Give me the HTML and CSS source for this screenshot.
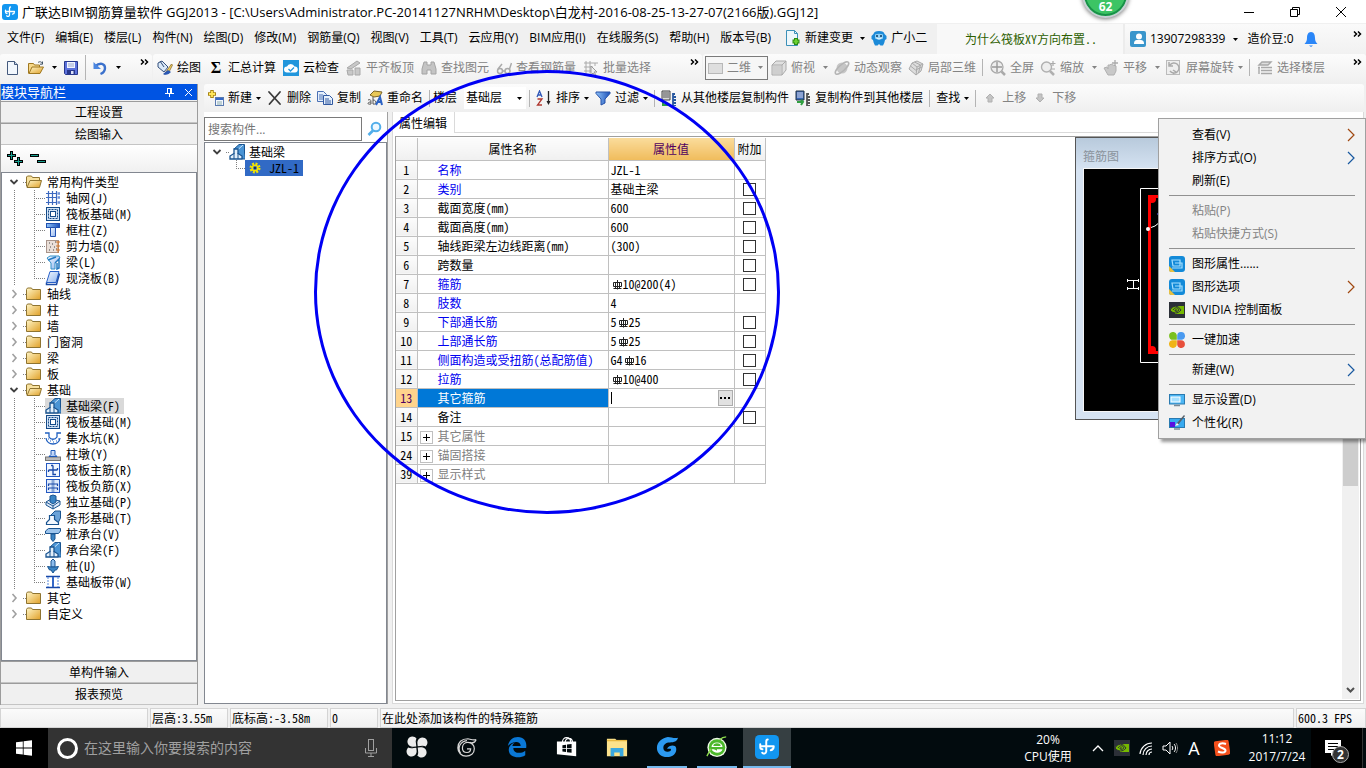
FILE: index.html
```html
<!DOCTYPE html>
<html lang="zh-CN">
<head>
<meta charset="utf-8">
<title>广联达BIM钢筋算量软件 GGJ2013</title>
<link rel="stylesheet" href="styles.css">
</head>
<body>
<svg class="defs" aria-hidden="true">
  <defs>
    <linearGradient id="gFold" x1="0" y1="0" x2="1" y2="1"><stop offset="0" stop-color="#fff6c8"/><stop offset="1" stop-color="#e0a028"/></linearGradient>
    <linearGradient id="gBlue" x1="0" y1="0" x2="1" y2="1"><stop offset="0" stop-color="#f4f9ff"/><stop offset="1" stop-color="#8fb4ee"/></linearGradient>
    <linearGradient id="gFun" x1="0" y1="0" x2="1" y2="0"><stop offset="0" stop-color="#8ec2f8"/><stop offset="1" stop-color="#1c50b8"/></linearGradient>
  </defs>
  <symbol id="app" viewBox="0 0 16 16"><rect width="16" height="16" rx="3" fill="#1296f0"/><path d="M8.500 3Q7.500 3 7.500 4.500V11a1.500 1.500 0 0 1-2.700.8M3.500 6.200V8q0 1.500 1.500 1.500M3.500 7.500h9M12.500 7.500q0 2.300-2 2.700" fill="none" stroke="#fff" stroke-width="1.300" stroke-linecap="round"/></symbol>
  <symbol id="down" viewBox="0 0 5 3"><path d="M0 0h5L2.500 3z" fill="currentColor"/></symbol>
  <symbol id="more" viewBox="0 0 9 6"><path d="M1 .5l2.500 2.500L1 5.500M5 .5l2.500 2.500L5 5.500" fill="none" stroke="#000" stroke-width="1.500"/></symbol>
  <symbol id="new" viewBox="0 0 16 16"><path d="M1.500 1.500h7l3 3v10h-10z" fill="#f2f7fd" stroke="#44597c"/><path d="M8.500 1.500v3h3" fill="#c8d8ec" stroke="#44597c"/></symbol>
  <symbol id="open" viewBox="0 0 16 16"><path d="M.5 13.500v-10h5l1 1.500h5v2" fill="#f6d88a" stroke="#a07820"/><path d="M1 13.500l3-6.500h11.500l-3.500 6.500z" fill="url(#gFold)" stroke="#a07820"/><path d="M10 2.500c2-1.500 4-.5 4.500 1.500m0-2.500v2.700h-2.500" fill="none" stroke="#456"/></symbol>
  <symbol id="save" viewBox="0 0 16 16"><path d="M1.500 1.500h13v13h-12l-1-1z" fill="#5d72dc" stroke="#28388c"/><rect x="4" y="2" width="8" height="6" fill="#f2f5ff"/><path d="M5 4h6M5 6h6" stroke="#99a6cc"/><rect x="4" y="10" width="8" height="4.500" fill="#28388c"/><rect x="8" y="11" width="2.500" height="3" fill="#dce2fa"/></symbol>
  <symbol id="undo" viewBox="0 0 16 16"><path d="M3 6.500c5-4.500 10-3 10 1.500 0 3-2 5-4.500 6" fill="none" stroke="#3b71cc" stroke-width="2.400"/><path d="M1.500 2v7H9z" fill="#4b86e0"/></symbol>
  <symbol id="brush" viewBox="0 0 16 16"><path d="M1 3l4-2 6 6-4 5-6-5z" fill="#dbe9f8" stroke="#35507c"/><path d="M3 1l4 6" stroke="#35507c"/><path d="M14.500 4l-5 7-2 3 4-1 4-8z" fill="#f0d060" stroke="#7a5a20" stroke-width=".7"/><path d="M6 14c3 2 6 0 8-2l-3-2z" fill="#2a58b4"/></symbol>
  <symbol id="cloud" viewBox="0 0 16 16"><rect width="16" height="16" fill="#2196dc"/><path d="M4 12.500a3 3 0 0 1 0-6 4 4 0 0 1 7.500 0 3 3 0 0 1 .5 6z" fill="#fff"/><path d="M5.500 9l2 2 3.500-3.500" fill="none" stroke="#2196dc" stroke-width="1.300"/></symbol>
  <symbol id="align" viewBox="0 0 16 16"><path d="M1 8l10-7 3 2-9 6zM1 10h6v5H2zM9 8h5v7H9z" fill="#c8c8c8" stroke="#a8a8a8"/></symbol>
  <symbol id="binoc" viewBox="0 0 16 16"><path d="M3 2h3v3h4V2h3l2 7v5h-5v-4H6v4H1V9z" fill="#c4c4c4" stroke="#a4a4a4"/></symbol>
  <symbol id="glass" viewBox="0 0 16 16"><g fill="none" stroke="#aaa" stroke-width="1.500"><circle cx="4" cy="11" r="2.500"/><circle cx="11.500" cy="11" r="2.500"/><path d="M6.500 11h2.500M2 9l4-5M13.500 9l2-6"/></g></symbol>
  <symbol id="batch" viewBox="0 0 16 16"><path d="M1 3h14M1 7h9M1 11h7M3 1v13M7 1v12M12 3v3" stroke="#aaa" fill="none"/><path d="M8 6l6 6h-3l2 3-1 1-2-3-2 2z" fill="#eee" stroke="#999"/></symbol>
  <symbol id="rect2d" viewBox="0 0 16 16"><rect x=".5" y="3.500" width="14" height="10" fill="#dedede" stroke="#b8b8b8"/></symbol>
  <symbol id="cube" viewBox="0 0 16 16"><path d="M1 5l4-4h10v9l-4 5H1z" fill="#e0e0e0" stroke="#aaa"/><path d="M1 5h10v10M11 5l4-4" fill="none" stroke="#aaa"/><path d="M2 6h8v8H2z" fill="#cfcfcf"/></symbol>
  <symbol id="orbit" viewBox="0 0 16 16"><circle cx="8" cy="8" r="5.500" fill="#c6c6c6"/><ellipse cx="8" cy="8" rx="8.500" ry="3" transform="rotate(-42 8 8)" fill="none" stroke="#b4b4b4" stroke-width="1.500"/></symbol>
  <symbol id="local3d" viewBox="0 0 16 16"><path d="M1 9l3-6 5-2 6 3-2 7-5 4z" fill="#ddd" stroke="#aaa"/><path d="M4 3l5 4-1 8M9 7l6-3M2.500 6l5 4 6.500-3M6.500 2l6 3-2 8" fill="none" stroke="#aaa"/></symbol>
  <symbol id="full" viewBox="0 0 16 16"><circle cx="7" cy="7" r="6" fill="#eee" stroke="#aaa" stroke-width="1.300"/><path d="M7 2v10M2 7h10" stroke="#999" stroke-width="1.400"/><path d="M11.500 11.500l3.500 3.500" stroke="#aaa" stroke-width="2.500"/></symbol>
  <symbol id="zoom" viewBox="0 0 16 16"><circle cx="6.500" cy="7" r="5" fill="#eee" stroke="#b0b0b0" stroke-width="1.400"/><path d="M10 11l4 4" stroke="#b0b0b0" stroke-width="2.500"/><path d="M13 1v5M10.500 3.500h5M11 9h4" stroke="#aaa" stroke-width="1.200"/></symbol>
  <symbol id="pan" viewBox="0 0 16 16"><path d="M1 8l3-1 1 2V5h2l1-1 2 1 3 1v5l-2 4H5z" fill="#c8c8c8" stroke="#b0b0b0"/><path d="M12 0v6M9 3h6" stroke="#aaa" stroke-width="1.300"/></symbol>
  <symbol id="rot" viewBox="0 0 16 16"><rect x=".5" y=".5" width="13" height="14" fill="#eee" stroke="#bbb"/><path d="M4 5a5 5 0 1 1 0 6M3 2v4h4M7 14l3-2-3-2" fill="none" stroke="#aaa" stroke-width="1.500"/></symbol>
  <symbol id="floors" viewBox="0 0 16 16"><path d="M2 5l3-3h9l-3 3zM4 7.500h11M4 10.500h11M4 13.500h11M1 7.500h2M2 7v7" fill="#ddd" stroke="#a8a8a8" stroke-width="1.400"/></symbol>
  <symbol id="addc" viewBox="0 0 16 16"><path d="M4 0v8M0 4h8" stroke="#a88410" stroke-width="3.500"/><path d="M4 1v6M1 4h6" stroke="#ffe65a" stroke-width="1.800"/><rect x="7.500" y="7.500" width="8" height="8" fill="#f4f8ff" stroke="#5a7ab0"/><path d="M8 9h7" stroke="#3468c8" stroke-width="2"/><path d="M9 12h5M9 14h5" stroke="#8aa"/></symbol>
  <symbol id="del" viewBox="0 0 16 16"><path d="M2 2l11 12M13 2L2.500 14" stroke="#3a3a3a" stroke-width="1.800" stroke-linecap="round"/></symbol>
  <symbol id="copy" viewBox="0 0 16 16"><path d="M.5 1.500h6l3 3v7h-9z" fill="#e6f0fc" stroke="#4a70b4"/><path d="M2 5h4M2 7h4M2 9h4" stroke="#4a70b4"/><path d="M6.500 5.500h6l3 3v6h-9z" fill="#e6f0fc" stroke="#3058a0"/><path d="M8 9h4M8 11h6M8 13h6" stroke="#3058a0"/></symbol>
  <symbol id="ren" viewBox="0 0 16 16"><path d="M3 5l4-4 8 1-2 4-6 1z" fill="#e8c858" stroke="#7a6428"/><path d="M1 10c3-1 3 0 3 4-4 1-4-2 0-2M6 7v7c4 1 4-4 0-4" fill="none" stroke="#555"/><path d="M9 15l4-8 2 8M10 12h5" fill="none" stroke="#2c62c4" stroke-width="2"/></symbol>
  <symbol id="az" viewBox="0 0 16 16"><path d="M1 7l2.500-6L6 7M2 5h3" fill="none" stroke="#3058b8" stroke-width="1.300"/><path d="M1.500 9H6l-4.500 6H6" fill="none" stroke="#b03830" stroke-width="1.300"/><path d="M12.500 1v12" stroke="#222" stroke-width="1.300"/><path d="M10.500 11h4l-2 4z" fill="#222"/></symbol>
  <symbol id="filter" viewBox="0 0 16 16"><path d="M1 2h14v1.500L10 9v4l-4 2V9L1 3.500z" fill="url(#gFun)" stroke="#2450a8"/></symbol>
  <symbol id="cpf" viewBox="0 0 16 16"><path d="M1 1h8v9H1z" fill="#d8d8d8" stroke="#444"/><path d="M2 3h6M2 5h6M2 7h6" stroke="#555"/><path d="M14 4h-2v12h3M12 7h3M12 10h3M12 13h3" fill="none" stroke="#2858a0" stroke-width="1.800"/><path d="M2 11v4h5" fill="none" stroke="#30a040" stroke-width="2"/></symbol>
  <symbol id="cpt" viewBox="0 0 16 16"><path d="M1 1h8v9H1z" fill="#3a68b8" stroke="#234"/><path d="M2 3h6M2 5h6M2 7h6" stroke="#dde"/><path d="M14 4h-2v12h3M12 7h3M12 10h3M12 13h3" fill="none" stroke="#555" stroke-width="1.800"/><path d="M2 12h5M6 10l2 2-2 3" fill="none" stroke="#30a040" stroke-width="2"/></symbol>
  <symbol id="up" viewBox="0 0 16 16"><path d="M8 4l4 4h-2v4H6V8H4z" fill="#c4c4c4" stroke="#b0b0b0"/></symbol>
  <symbol id="dn" viewBox="0 0 16 16"><path d="M8 12L4 8h2V4h4v4h2z" fill="#c4c4c4" stroke="#b0b0b0"/></symbol>
  <symbol id="chg" viewBox="0 0 16 16"><path d="M1.500.5h8l3 3v12h-11z" fill="#eef7fb" stroke="#3c90b8"/><path d="M9.500.5v3h3" fill="none" stroke="#3c90b8"/><path d="M11 8v7M7.500 11.500h7" stroke="#2c8c14" stroke-width="4"/><path d="M11 9v5M8.500 11.500h5" stroke="#6cd030" stroke-width="2"/></symbol>
  <symbol id="robot" viewBox="0 0 16 16"><path d="M2.500 4Q3 1 8 1t5.500 3l2 2v3L14 10q-.5 3-2 5.500h-2.500L8 14l-1.500 1.500H4q-1.500-2.500-2-5.500L.5 9V6z" fill="#1c8ad8"/><path d="M4 4.500q4-1.500 8 0v4q-4 2-8 0z" fill="#8fd0f6"/><circle cx="6" cy="6" r="1" fill="#0a3a60"/><circle cx="10" cy="6" r="1" fill="#0a3a60"/><path d="M5.500 8c1.500 1.300 3.500 1.300 5 0" stroke="#fff" fill="none"/></symbol>
  <symbol id="user" viewBox="0 0 16 16"><rect width="16" height="16" rx="2" fill="#3a96cc"/><circle cx="9" cy="5.500" r="3" fill="#fff"/><path d="M4 13c0-4 2-4 4-4h2c3 0 4 1 4 4z" fill="#fff"/></symbol>
  <symbol id="bell" viewBox="0 0 16 16"><path d="M8 1c3 0 4 3 4 6s1 4 2.500 6h-13C3 11 4 10 4 7s1-6 4-6z" fill="#2a86f8"/><path d="M6 14.500h4L8 16z" fill="#2a86f8"/></symbol>
  <symbol id="foldc" viewBox="0 0 16 16"><path d="M.5 3.500l1-1.500h4l1 1.500h8v10H.5z" fill="url(#gFold)" stroke="#8f7430"/></symbol>
  <symbol id="foldo" viewBox="0 0 16 16"><path d="M.5 12.500V3l1-1h4l1 1.500h7v3" fill="#f8e2a0" stroke="#8f7430"/><path d="M1 13.500l3-7h11.500l-2 7z" fill="url(#gFold)" stroke="#8f7430"/></symbol>
  <symbol id="open-t" viewBox="0 0 10 16"><path d="M1.500 6L5 9.500 8.500 6" fill="none" stroke="#404040" stroke-width="1.800"/></symbol>
  <symbol id="shut-t" viewBox="0 0 10 16"><path d="M3.500 4L7 8l-3.500 4" fill="none" stroke="#a0a0a0" stroke-width="1.600"/></symbol>
  <symbol id="grid" viewBox="0 0 16 16"><path d="M1 3.500h11M1 7.500h11M1 12.500h11M3.500 1v14M7.500 1v14M11.500 1v14" stroke="#3e6ac0" stroke-width="1.200"/><path d="M12.500 3.500h2.500M12.500 7.500h2.500M12.500 12.500h2.500" stroke="#6c90d8" stroke-width="2.500"/></symbol>
  <symbol id="raft" viewBox="0 0 16 16"><rect x="1.500" y="1.500" width="13" height="13" fill="#d4e4f6" stroke="#144a88"/><path d="M3.500 3.500h9v9h-9z" fill="none" stroke="#144a88" stroke-dasharray="2 1"/><rect x="5.500" y="5.500" width="5" height="5" fill="#fff" stroke="#144a88"/></symbol>
  <symbol id="col" viewBox="0 0 16 16"><rect x="1.500" y="1.500" width="13" height="4" fill="url(#gFun)" stroke="#2050b0"/><path d="M5.500 5.500h5v9h-5z" fill="url(#gBlue)" stroke="#2050b0"/></symbol>
  <symbol id="wall" viewBox="0 0 16 16"><rect x="1.500" y="2.500" width="12" height="12" fill="#eadfd8" stroke="#a8948a"/><path d="M4 5h1M7 6h1M10 4h1M5 9h1M9 9h1M4 12h1M8 12h1M11 11h1" stroke="#444"/><path d="M13 3v12M11 4h4M11 8h4M11 12h4" stroke="#d07830"/></symbol>
  <symbol id="beam" viewBox="0 0 16 16"><path d="M2 4l3-2h9l1 2-5 5v6l-4 0V9z" fill="url(#gBlue)" stroke="#3090c8"/><path d="M3 6l8-3M10 9l4-4v9l-2 1v-6" fill="none" stroke="#2478c0" stroke-width="1.500"/></symbol>
  <symbol id="slab" viewBox="0 0 16 16"><path d="M5 1.500h9l-3 11H1.500z" fill="url(#gBlue)" stroke="#2860c8"/><path d="M1.500 12.500v2h10l3-11" fill="none" stroke="#1c4ca8" stroke-width="1.500"/></symbol>
  <symbol id="fbeam" viewBox="0 0 16 16"><path d="M5 5l5-4.500h5.500V9l1 6h-3L9 10z" fill="#4a94d4" stroke="#1a5490"/><path d="M9 5.500l5-4.500" stroke="#cfe6fa"/><path d="M1 15v-3l4-2.500V5h4v4.500l4 2.500v3z" fill="#e2effa" stroke="#1a5490" stroke-width="1.300"/><path d="M5 9v6M9 9v6" stroke="#1a5490"/></symbol>
  <symbol id="pit" viewBox="0 0 16 16"><path d="M0 3h4v4c2 3 6 3 8 0V3h4M1 8c1 8 13 8 14 0" fill="none" stroke="#2060c0" stroke-width="1.300"/><path d="M3 9h1M5 11h1M8 12h1M11 11h1M13 9h1M7 10h1" stroke="#2060c0"/></symbol>
  <symbol id="pier" viewBox="0 0 16 16"><rect x=".5" y="11" width="15" height="3.500" fill="#bbb" stroke="#777"/><path d="M4 10.500l2-2V4.500h4v4l2 2z" fill="url(#gBlue)" stroke="#1c58b8"/></symbol>
  <symbol id="mainr" viewBox="0 0 16 16"><rect x="1.500" y="1.500" width="13" height="13" fill="#f0f6ff" stroke="#2458c0"/><path d="M8 3.500v9h3M8 3.500H6M3.500 8h9M3.500 8v2M12.500 8V6" fill="none" stroke="#1848a8" stroke-width="1.300"/></symbol>
  <symbol id="negr" viewBox="0 0 16 16"><rect x="1.500" y="1.500" width="13" height="13" fill="#e0ebfc" stroke="#2458c0"/><path d="M8 2v12" stroke="#8aa8d8" stroke-width="3"/><path d="M3.500 8V6h9v2M3.500 12v-2h9v2" fill="none" stroke="#1848a8" stroke-width="1.200"/></symbol>
  <symbol id="indep" viewBox="0 0 16 16"><path d="M1 8l5-3 9 2v4l-7 4-7-4z" fill="#dfeaf8" stroke="#1a5490"/><path d="M5 2l3-1 3 1v6L8 10 5 8z" fill="#3a84c4" stroke="#1a5490"/><path d="M1 8l7 4 7-5M8 12v3" fill="none" stroke="#1a5490"/></symbol>
  <symbol id="strip" viewBox="0 0 16 16"><path d="M6 5l4-4h5.500v7l-3 6z" fill="#6aa2d8" stroke="#1a5490"/><path d="M1.500 14.500v-2l3-3v-4h5v4l4 3v2z" fill="#f4f9ff" stroke="#1a5490" stroke-width="1.200"/></symbol>
  <symbol id="cap" viewBox="0 0 16 16"><path d="M.5 5l3-2.500h12V5l-2 2.500H.5z" fill="#9cc4ec" stroke="#1a5490"/><path d="M6 8h4v5l-2 2.500L6 13z" fill="#3a84c4" stroke="#1a5490"/></symbol>
  <symbol id="pile" viewBox="0 0 16 16"><path d="M8 1l2 2v6H6V3z" fill="#8cbcec" stroke="#1a5490"/><path d="M2.500 8.500L6 9h4l3.500-.5-2 3.500H10l-2 3-2-3H4.500z" fill="#3a84c4" stroke="#1a5490"/></symbol>
  <symbol id="band" viewBox="0 0 16 16"><path d="M1 2.500h14M1 13.500h14" stroke="#1848a8" stroke-width="1.600"/><path d="M3 3v10M13 3v10" stroke="#5488dc" stroke-dasharray="2 1"/><path d="M8 3v10" stroke="#3468c8" stroke-width="2"/></symbol>
  <symbol id="gear" viewBox="0 0 12 12"><circle cx="6" cy="6" r="4" fill="none" stroke="#f4e400" stroke-width="3" stroke-dasharray="1.800 1.340"/><circle cx="6" cy="6" r="2.800" fill="none" stroke="#f4e400" stroke-width="1.600"/><circle cx="6" cy="6" r="1" fill="#222"/></symbol>
  <symbol id="mag" viewBox="0 0 16 16"><circle cx="9" cy="6" r="4.300" fill="#eef8ff" stroke="#52aeea" stroke-width="2"/><path d="M6 9.500l-4.500 4.500" stroke="#52aeea" stroke-width="2.600"/></symbol>
  <symbol id="rebar" viewBox="0 0 12 12"><path d="M6.500 1v9.500M2.500 3.500h8v4h-8zM4.500 3.500v6M8.500 3.500v6M2.500 9.500h8" fill="none" stroke="#222" stroke-width="1"/></symbol>
  <symbol id="arr" viewBox="0 0 8 14"><path d="M1 1l6 6-6 6" fill="none" stroke="currentColor" stroke-width="1.200"/></symbol>
  <symbol id="intel" viewBox="0 0 16 16"><rect width="16" height="16" rx="3" fill="#138ad8"/><path d="M3 4h8v6H4zM6 7h7v5H7M3 12h5" fill="none" stroke="#a6e0ff" stroke-width="1.200"/><path d="M0 10l6 6H2a2 2 0 0 1-2-2z" fill="#e8c040"/></symbol>
  <symbol id="nv" viewBox="0 0 16 16"><rect width="16" height="16" fill="#2c3038"/><path d="M6 4h9v8H6z" fill="#76b900"/><path d="M1 8c3-5 8-5 11 0-3 4-8 4-11 0z" fill="#76b900" stroke="#2c3038"/><path d="M4 8c2-3 5-3 6 0-2 2-4 2-4 0h2" fill="none" stroke="#2c3038"/></symbol>
  <symbol id="boost" viewBox="0 0 16 16"><path d="M7.800 7.800H4A3.900 3.900 0 1 1 7.800 3z" fill="#7ac020"/><path d="M8.200 7.800V4a3.900 3.900 0 1 1 4.800 3.800z" fill="#4a9af0"/><path d="M7.800 8.200V12A3.900 3.900 0 1 1 3 8.200z" fill="#f0b418"/><path d="M8.200 8.200H12A3.900 3.900 0 1 1 8.200 13z" fill="#e8503c"/></symbol>
  <symbol id="disp" viewBox="0 0 16 16"><rect x=".5" y="2.500" width="15" height="9.500" fill="#4cb6f4" stroke="#2a7ab0"/><rect x="2" y="5" width="9" height="5" fill="#a6e0ff" stroke="#fff"/><path d="M5 13.500h6" stroke="#7a8a96" stroke-width="1.500"/></symbol>
  <symbol id="pers" viewBox="0 0 16 16"><rect x=".5" y="3.500" width="15" height="9" fill="#38aaf0" stroke="#2a7ab0"/><path d="M1 7h5v5H1z" fill="#5a10e0"/><path d="M15 0L8 8l-2 3 3-1 7-9z" fill="#56616b"/><path d="M6 11l2-3 2 2z" fill="#fff"/><path d="M5 14h6" stroke="#7a8a96" stroke-width="1.500"/></symbol>
  <symbol id="win" viewBox="0 0 16 16"><path d="M0 2.300l6.800-.9v6.200H0zM7.600 1.300L16 .2v7.400H7.600zM0 8.400h6.800v6.200L0 13.700zM7.600 8.400H16v7.400l-8.400-1.100z" fill="#fff"/></symbol>
  <symbol id="mic" viewBox="0 0 12 18"><rect x="3.500" y=".5" width="5" height="11" fill="none" stroke="#a0a0a0"/><path d="M.5 9v5h11V9M6 14v3M3 17.500h6" fill="none" stroke="#a0a0a0"/></symbol>
  <symbol id="fan" viewBox="0 0 24 24"><g fill="#ececec"><path d="M11.600 11.600H7A5.500 5.500 0 1 1 11.600 3z"/><path d="M12.400 11.600V7A5.500 5.500 0 1 1 21 11.600z"/><path d="M12.400 12.400H17a5.500 5.500 0 1 1-4.600 8.600z"/><path d="M11.600 12.400V17A5.500 5.500 0 1 1 3 12.400z"/></g><path d="M12 3c-2 3 0 5 0 9s2 6 0 9M3 12c3 2 5 0 9 0s6-2 9 0" stroke="#02090b" stroke-width="1.200" fill="none"/></symbol>
  <symbol id="swirl" viewBox="0 0 24 24"><path d="M22 4c-3 1-5 0-9-1C6 3 2 7 2 13c0 5 4 9 9 9s9-3 9-8c0-4-3-7-7-7s-6 3-6 6 2 5 5 5 4-2 4-4h-4M22 4c-1 3-4 4-7 3M5 19c-4-7 0-13 7-14" fill="none" stroke="currentColor" stroke-width="1.300"/></symbol>
  <symbol id="gtask" viewBox="0 0 24 24"><path d="M24 2c-1 4-4 5-9 5-4 0-7 2-7 6 0 3 3 5 6 4 2 0 3-2 2-3h-4c2-4 9-5 10-1 1 6-4 10-10 10S1 19 1 13C1 6 7 2 13 1c3 0 7 2 11 1z" fill="#2c9af0"/></symbol>
  <symbol id="edge" viewBox="0 0 24 24"><path d="M2 11C3 5 7 1 13 1c7 0 10 5 9 12H8c0 6 8 7 13 3v5c-6 4-18 3-18-6 0-4 3-7 7-8-2 1-3 3-3 4h9c0-7-10-5-14 0z" fill="#0a78d6"/></symbol>
  <symbol id="store" viewBox="0 0 24 24"><path d="M7 7c0-7 9-7 9 0M10 7c0-6 8-6 8 0" fill="none" stroke="#fff" stroke-width="1.300"/><path d="M1 6l21-0v16l-21-2z" fill="#fff"/><path d="M7 10l4-.5V13H7zM12 9.400l5-.6V13h-5zM7 14h4v3.500L7 17zM12 14h5v4.200l-5-.6z" fill="#02090b"/></symbol>
  <symbol id="files" viewBox="0 0 24 24"><path d="M1 3h9l2 2h11v17H1z" fill="#fce28c"/><path d="M1 5h22" stroke="#e8b840" stroke-width="1.500"/><path d="M5 22v-9h14v9h-4v-4H9v4z" fill="#3aa8e0"/></symbol>
  <symbol id="green" viewBox="0 0 24 24"><circle cx="12" cy="12.500" r="10.500" fill="#f0fae8"/><circle cx="12" cy="12.500" r="9" fill="#4cb82c"/><path d="M6 12a6 5 0 0 1 12 0zM6 14.500h12c-1 5-10 5-12 0z" fill="#fff"/><path d="M8 11a4 3 0 0 1 8 0zM8 14h4v2z" fill="#4cb82c"/><path d="M1 22c2-4 3-5 4-8M22 1c-3 0-5 1-7 3" stroke="#8cdc4c" stroke-width="1.500" fill="none"/></symbol>
  <symbol id="wifi" viewBox="0 0 16 16"><g fill="none" stroke="#fff"><path d="M2 14A12 12 0 0 1 14 3M5 15a9 9 0 0 1 9-9M8 15a6 6 0 0 1 6-6M11 15a3 3 0 0 1 3-3" stroke-width="1.200"/></g></symbol>
  <symbol id="vol" viewBox="0 0 16 16"><path d="M1 6h3l4-4v12l-4-4H1z" fill="none" stroke="#fff"/><path d="M10 6c1 1 1 3 0 4M12 4c2 2 2 6 0 8" fill="none" stroke="#fff"/><path d="M14 3c2 3 2 7 0 10" fill="none" stroke="#888"/></symbol>
  <symbol id="sogou" viewBox="0 0 16 16"><rect x=".5" y=".5" width="15" height="15" rx="2" fill="#f4501c" transform="rotate(-8 8 8)"/><path d="M12 4c-3-1-7-1-7 1.500S11.500 8 11.500 10.500 7 13 4 11.500" fill="none" stroke="#fff" stroke-width="2"/></symbol>
  <symbol id="note" viewBox="0 0 18 16"><path d="M1 0h16v13h-6l-4 3v-3H1z" fill="#fff"/><path d="M4 3.500h10M4 6.500h10M4 9.500h10" stroke="#000"/></symbol>
</svg>

<div class="app">
  <header class="titlebar">
    <svg class="ic"><use href="#app"/></svg>
    <h1>广联达BIM钢筋算量软件 GGJ2013 - [C:\Users\Administrator.PC-20141127NRHM\Desktop\白龙村-2016-08-25-13-27-07(2166版).GGJ12]</h1>
    <div class="winctl">
      <button aria-label="最小化"><svg viewBox="0 0 10 10"><path d="M0 5.500h10" stroke="#000"/></svg></button>
      <button aria-label="还原"><svg viewBox="0 0 10 10"><path d="M.5 2.500h7v7h-7zM2.500 2V.5h7v7H8" fill="none" stroke="#000"/></svg></button>
      <button aria-label="关闭"><svg viewBox="0 0 10 10"><path d="M0 0l10 10M10 0L0 10" stroke="#000"/></svg></button>
    </div>
  </header>

  <nav class="menubar">
    <div class="menus">
      <button>文件(F)</button><button>编辑(E)</button><button>楼层(L)</button><button>构件(N)</button><button>绘图(D)</button><button>修改(M)</button><button>钢筋量(Q)</button><button>视图(V)</button><button>工具(T)</button><button>云应用(Y)</button><button>BIM应用(I)</button><button>在线服务(S)</button><button>帮助(H)</button><button>版本号(B)</button>
      <button class="chg"><svg class="ic"><use href="#chg"/></svg>新建变更<svg class="dn"><use href="#down"/></svg></button>
      <button class="rb"><svg class="ic"><use href="#robot"/></svg>广小二</button>
    </div>
    <div class="tip song"><a href="#">为什么筏板XY方向布置..</a></div>
    <div class="account">
      <button><svg class="ic"><use href="#user"/></svg>13907298339<svg class="dn"><use href="#down"/></svg></button>
      <button>造价豆:0</button>
      <button aria-label="通知"><svg class="ic"><use href="#bell"/></svg></button>
      <svg class="more"><use href="#more"/></svg>
    </div>
  </nav>

  <div class="tools">
    <div class="band file">
      <button aria-label="新建"><svg class="ic"><use href="#new"/></svg></button>
      <button aria-label="打开"><svg class="ic"><use href="#open"/></svg><svg class="dn"><use href="#down"/></svg></button>
      <button aria-label="保存"><svg class="ic"><use href="#save"/></svg></button>
      <i class="sep"></i>
      <button aria-label="撤销"><svg class="ic"><use href="#undo"/></svg><svg class="dn"><use href="#down"/></svg></button>
      <svg class="more"><use href="#more"/></svg>
    </div>
    <div class="band calc">
      <button><svg class="ic"><use href="#brush"/></svg>绘图</button>
      <button><b class="sigma">Σ</b>汇总计算</button>
      <button><svg class="ic"><use href="#cloud"/></svg>云检查</button>
      <button disabled><svg class="ic"><use href="#align"/></svg>平齐板顶</button>
      <button disabled><svg class="ic"><use href="#binoc"/></svg>查找图元</button>
      <button disabled><svg class="ic"><use href="#glass"/></svg>查看钢筋量</button>
      <button disabled><svg class="ic"><use href="#batch"/></svg>批量选择</button>
      <svg class="more"><use href="#more"/></svg>
    </div>
    <div class="band view">
      <button disabled class="boxed"><svg class="ic"><use href="#rect2d"/></svg>二维<svg class="dn"><use href="#down"/></svg></button>
      <button disabled><svg class="ic"><use href="#cube"/></svg>俯视<svg class="dn"><use href="#down"/></svg></button>
      <button disabled><svg class="ic"><use href="#orbit"/></svg>动态观察</button>
      <button disabled><svg class="ic"><use href="#local3d"/></svg>局部三维</button>
      <i class="sep"></i>
      <button disabled><svg class="ic"><use href="#full"/></svg>全屏</button>
      <button disabled><svg class="ic"><use href="#zoom"/></svg>缩放<svg class="dn"><use href="#down"/></svg></button>
      <button disabled><svg class="ic"><use href="#pan"/></svg>平移<svg class="dn"><use href="#down"/></svg></button>
      <button disabled><svg class="ic"><use href="#rot"/></svg>屏幕旋转<svg class="dn near"><use href="#down"/></svg></button>
      <i class="sep"></i>
      <button disabled><svg class="ic"><use href="#floors"/></svg>选择楼层</button>
      <svg class="more"><use href="#more"/></svg>
    </div>
  </div>

  <main class="work">
    <aside class="nav song">
      <div class="navhead"><h2>模块导航栏</h2>
        <button aria-label="固定"><svg viewBox="0 0 9 9"><path d="M2 .5h5M2.500 0v5M6.500 0v5M5.500 0v5M0 5.500h9M4.500 5v4" stroke="#fff" fill="none"/></svg></button>
        <button aria-label="关闭"><svg viewBox="0 0 9 9"><path d="M1 1l7 7M8 1L1 8" stroke="#fff"/></svg></button>
      </div>
      <button class="sect">工程设置</button>
      <button class="sect">绘图输入</button>
      <div class="expand">
        <button aria-label="全部展开"><svg viewBox="0 0 16 16"><path d="M4.500 0v9M0 4.500h9M11.500 6v9M7 10.500h9" stroke="#000" stroke-width="3"/><path d="M4.500 1v7M1 4.500h7M11.500 7v7M8 10.500h7" stroke="#18a090"/></svg></button>
        <button aria-label="全部折叠"><svg viewBox="0 0 16 16"><path d="M0 4.500h9M7 10.500h9" stroke="#000" stroke-width="3"/><path d="M1 4.500h7M8 10.500h7" stroke="#18a090"/></svg></button>
      </div>
      <ul class="tree">
        <li><div class="row"><svg class="tw"><use href="#open-t"/></svg><i class="stub"></i><svg class="ic"><use href="#foldo"/></svg>常用构件类型</div>
          <ul>
            <li class="row"><i class="elbow"></i><svg class="ic"><use href="#grid"/></svg><span>轴网(J)</span></li>
            <li class="row"><i class="elbow"></i><svg class="ic"><use href="#raft"/></svg><span>筏板基础(M)</span></li>
            <li class="row"><i class="elbow"></i><svg class="ic"><use href="#col"/></svg><span>框柱(Z)</span></li>
            <li class="row"><i class="elbow"></i><svg class="ic"><use href="#wall"/></svg><span>剪力墙(Q)</span></li>
            <li class="row"><i class="elbow"></i><svg class="ic"><use href="#beam"/></svg><span>梁(L)</span></li>
            <li class="row"><i class="elbow end"></i><svg class="ic"><use href="#slab"/></svg><span>现浇板(B)</span></li>
          </ul></li>
        <li class="row"><svg class="tw"><use href="#shut-t"/></svg><i class="stub"></i><svg class="ic"><use href="#foldc"/></svg>轴线</li>
        <li class="row"><svg class="tw"><use href="#shut-t"/></svg><i class="stub"></i><svg class="ic"><use href="#foldc"/></svg>柱</li>
        <li class="row"><svg class="tw"><use href="#shut-t"/></svg><i class="stub"></i><svg class="ic"><use href="#foldc"/></svg>墙</li>
        <li class="row"><svg class="tw"><use href="#shut-t"/></svg><i class="stub"></i><svg class="ic"><use href="#foldc"/></svg>门窗洞</li>
        <li class="row"><svg class="tw"><use href="#shut-t"/></svg><i class="stub"></i><svg class="ic"><use href="#foldc"/></svg>梁</li>
        <li class="row"><svg class="tw"><use href="#shut-t"/></svg><i class="stub"></i><svg class="ic"><use href="#foldc"/></svg>板</li>
        <li><div class="row"><svg class="tw"><use href="#open-t"/></svg><i class="stub"></i><svg class="ic"><use href="#foldo"/></svg>基础</div>
          <ul>
            <li class="row"><i class="elbow"></i><div class="cur"><svg class="ic"><use href="#fbeam"/></svg><span>基础梁(F)</span></div></li>
            <li class="row"><i class="elbow"></i><svg class="ic"><use href="#raft"/></svg><span>筏板基础(M)</span></li>
            <li class="row"><i class="elbow"></i><svg class="ic"><use href="#pit"/></svg><span>集水坑(K)</span></li>
            <li class="row"><i class="elbow"></i><svg class="ic"><use href="#pier"/></svg><span>柱墩(Y)</span></li>
            <li class="row"><i class="elbow"></i><svg class="ic"><use href="#mainr"/></svg><span>筏板主筋(R)</span></li>
            <li class="row"><i class="elbow"></i><svg class="ic"><use href="#negr"/></svg><span>筏板负筋(X)</span></li>
            <li class="row"><i class="elbow"></i><svg class="ic"><use href="#indep"/></svg><span>独立基础(P)</span></li>
            <li class="row"><i class="elbow"></i><svg class="ic"><use href="#strip"/></svg><span>条形基础(T)</span></li>
            <li class="row"><i class="elbow"></i><svg class="ic"><use href="#cap"/></svg><span>桩承台(V)</span></li>
            <li class="row"><i class="elbow"></i><svg class="ic"><use href="#fbeam"/></svg><span>承台梁(F)</span></li>
            <li class="row"><i class="elbow"></i><svg class="ic"><use href="#pile"/></svg><span>桩(U)</span></li>
            <li class="row"><i class="elbow end"></i><svg class="ic"><use href="#band"/></svg><span>基础板带(W)</span></li>
          </ul></li>
        <li class="row"><svg class="tw"><use href="#shut-t"/></svg><i class="stub"></i><svg class="ic"><use href="#foldc"/></svg>其它</li>
        <li class="row"><svg class="tw"><use href="#shut-t"/></svg><i class="stub"></i><svg class="ic"><use href="#foldc"/></svg>自定义</li>
      </ul>
      <button class="sect">单构件输入</button>
      <button class="sect">报表预览</button>
    </aside>

    <section class="editor">
      <div class="band member">
        <button><svg class="ic"><use href="#addc"/></svg>新建<svg class="dn near"><use href="#down"/></svg></button>
        <button><svg class="ic"><use href="#del"/></svg>删除</button>
        <button><svg class="ic"><use href="#copy"/></svg>复制</button>
        <button><svg class="ic"><use href="#ren"/></svg>重命名</button>
        <i class="sep"></i>
        <label for="floor">楼层</label>
        <div class="pick"><select id="floor"><option>基础层</option></select><svg class="dn"><use href="#down"/></svg></div>
        <i class="sep"></i>
        <button><svg class="ic"><use href="#az"/></svg>排序<svg class="dn near"><use href="#down"/></svg></button>
        <button><svg class="ic"><use href="#filter"/></svg>过滤<svg class="dn near"><use href="#down"/></svg></button>
        <i class="sep"></i>
        <button><svg class="ic"><use href="#cpf"/></svg>从其他楼层复制构件</button>
        <button><svg class="ic"><use href="#cpt"/></svg>复制构件到其他楼层</button>
        <i class="sep"></i>
        <button>查找<svg class="dn near"><use href="#down"/></svg></button>
        <i class="sep"></i>
        <button disabled><svg class="ic"><use href="#up"/></svg>上移</button>
        <button disabled><svg class="ic"><use href="#dn"/></svg>下移</button>
      </div>
      <div class="panes">
        <div class="list">
          <div class="find"><input type="text" placeholder="搜索构件..." aria-label="搜索构件"><button aria-label="搜索"><svg class="ic"><use href="#mag"/></svg></button></div>
          <ul class="tree members song">
            <li><div class="row"><svg class="tw"><use href="#open-t"/></svg><i class="stub"></i><svg class="ic"><use href="#fbeam"/></svg>基础梁</div>
              <ul><li class="row"><i class="elbow end"></i><div class="sel"><svg class="gear"><use href="#gear"/></svg><span>JZL-1</span></div></li></ul></li>
          </ul>
        </div>
        <div class="props">
          <div class="tabs"><button class="tab song">属性编辑</button><i></i></div>
          <div class="sheet">
            <table class="song">
              <colgroup><col class="c1"><col class="c2"><col class="c3"><col class="c4"></colgroup>
              <thead><tr><th></th><th>属性名称</th><th class="act">属性值</th><th>附加</th></tr></thead>
              <tbody>
                <tr><th>1</th><td class="k b">名称</td><td>JZL-1</td><td></td></tr>
                <tr><th>2</th><td class="k b">类别</td><td>基础主梁</td><td><input type="checkbox" aria-label="附加 类别"></td></tr>
                <tr><th>3</th><td class="k">截面宽度(mm)</td><td>600</td><td><input type="checkbox" aria-label="附加 截面宽度"></td></tr>
                <tr><th>4</th><td class="k">截面高度(mm)</td><td>600</td><td><input type="checkbox" aria-label="附加 截面高度"></td></tr>
                <tr><th>5</th><td class="k">轴线距梁左边线距离(mm)</td><td>(300)</td><td><input type="checkbox" aria-label="附加 轴线距离"></td></tr>
                <tr><th>6</th><td class="k">跨数量</td><td></td><td><input type="checkbox" aria-label="附加 跨数量"></td></tr>
                <tr><th>7</th><td class="k b">箍筋</td><td><svg class="rebar"><use href="#rebar"/></svg>10@200(4)</td><td><input type="checkbox" aria-label="附加 箍筋"></td></tr>
                <tr><th>8</th><td class="k b">肢数</td><td>4</td><td></td></tr>
                <tr><th>9</th><td class="k b">下部通长筋</td><td>5<svg class="rebar"><use href="#rebar"/></svg>25</td><td><input type="checkbox" aria-label="附加 下部通长筋"></td></tr>
                <tr><th>10</th><td class="k b">上部通长筋</td><td>5<svg class="rebar"><use href="#rebar"/></svg>25</td><td><input type="checkbox" aria-label="附加 上部通长筋"></td></tr>
                <tr><th>11</th><td class="k b">侧面构造或受扭筋(总配筋值)</td><td>G4<svg class="rebar"><use href="#rebar"/></svg>16</td><td><input type="checkbox" aria-label="附加 侧面筋"></td></tr>
                <tr><th>12</th><td class="k b">拉筋</td><td><svg class="rebar"><use href="#rebar"/></svg>10@400</td><td><input type="checkbox" aria-label="附加 拉筋"></td></tr>
                <tr class="on"><th>13</th><td class="k">其它箍筋</td><td><div class="edit"><i class="caret"></i><button aria-label="更多"><svg viewBox="0 0 11 2"><path d="M0 0h2v2H0zM4 0h2v2H4zM8 0h2v2H8z"/></svg></button></div></td><td></td></tr>
                <tr><th>14</th><td class="k">备注</td><td></td><td><input type="checkbox" aria-label="附加 备注"></td></tr>
                <tr><th>15</th><td class="g"><button aria-label="展开"><svg viewBox="0 0 7 7"><path d="M0 3.500h7M3.500 0v7" stroke="#000"/></svg></button>其它属性</td><td></td><td></td></tr>
                <tr><th>24</th><td class="g"><button aria-label="展开"><svg viewBox="0 0 7 7"><path d="M0 3.500h7M3.500 0v7" stroke="#000"/></svg></button>锚固搭接</td><td></td><td></td></tr>
                <tr><th>39</th><td class="g"><button aria-label="展开"><svg viewBox="0 0 7 7"><path d="M0 3.500h7M3.500 0v7" stroke="#000"/></svg></button>显示样式</td><td></td><td></td></tr>
              </tbody>
            </table>
            <div class="scroll"><i class="thumb"></i><svg viewBox="0 0 9 6"><path d="M1 1l3.500 3.500L8 1" fill="none" stroke="#505050" stroke-width="2"/></svg></div>
          </div>
        </div>
      </div>
    </section>
  </main>

  <footer class="status song">
    <span class="s1"></span><span class="s2">层高:3.55m</span><span class="s3">底标高:-3.58m</span><span class="s4">0</span><span class="s5">在此处添加该构件的特殊箍筋</span><span class="s6">600.3 FPS</span>
  </footer>

  <footer class="taskbar">
    <button class="start" aria-label="开始"><svg class="ic"><use href="#win"/></svg></button>
    <div class="cortana"><i class="ring"></i><input type="text" placeholder="在这里输入你要搜索的内容" aria-label="搜索"><svg class="mic"><use href="#mic"/></svg></div>
    <div class="pins">
      <button aria-label="加速"><svg><use href="#fan"/></svg></button>
      <button aria-label="浏览器" class="pale"><svg><use href="#swirl"/></svg></button>
      <button aria-label="Edge"><svg><use href="#edge"/></svg></button>
      <button aria-label="应用商店"><svg><use href="#store"/></svg></button>
      <button aria-label="文件资源管理器"><svg><use href="#files"/></svg></button>
      <button aria-label="广联达" class="run"><svg><use href="#gtask"/></svg></button>
      <button aria-label="网页浏览器" class="run"><svg><use href="#green"/></svg></button>
      <button aria-label="钢筋算量" class="run now"><svg><use href="#app"/></svg></button>
    </div>
    <div class="tray">
      <div class="cpu">20%<br>CPU使用</div>
      <svg class="chev" viewBox="0 0 12 7"><path d="M1 6l5-5 5 5" fill="none" stroke="#fff" stroke-width="1.300"/></svg>
      <svg class="ic"><use href="#nv"/></svg>
      <svg class="ic"><use href="#wifi"/></svg>
      <svg class="ic"><use href="#vol"/></svg>
      <span class="ime">A</span>
      <svg class="ic"><use href="#sogou"/></svg>
      <div class="clock">11:12<br>2017/7/24</div>
      <button class="notes" aria-label="通知中心"><svg><use href="#note"/></svg><b>2</b></button>
    </div>
  </footer>
</div>

<div class="stirrup">
  <h2>箍筋图</h2>
  <svg viewBox="0 0 200 242"><rect width="200" height="242"/><g fill="none" stroke="#fff"><path d="M200 19.500H56.500v174H200"/><path d="M63 60l8-3 5-4M43 111.500h12M43 119.500h12M49.500 111v9M43.500 110v3M54.500 110v3M43.500 118v3M54.500 118v3"/></g><path d="M200 27.500H65.500v156H200" fill="none" stroke="red" stroke-width="3"/><circle cx="68" cy="30" r="4" fill="red"/><circle cx="68" cy="181" r="4" fill="red"/><circle cx="64" cy="60" r="2" fill="#fff"/><path d="M73 45h2" stroke="#66f"/></svg>
</div>

<ul class="ctx" role="menu">
  <li><button>查看(V)<svg class="arr warm"><use href="#arr"/></svg></button></li>
  <li><button>排序方式(O)<svg class="arr cool"><use href="#arr"/></svg></button></li>
  <li><button>刷新(E)</button></li>
  <li class="line"></li>
  <li><button disabled>粘贴(P)</button></li>
  <li><button disabled>粘贴快捷方式(S)</button></li>
  <li class="line"></li>
  <li><button><svg class="ic"><use href="#intel"/></svg>图形属性......</button></li>
  <li><button><svg class="ic"><use href="#intel"/></svg>图形选项<svg class="arr warm"><use href="#arr"/></svg></button></li>
  <li><button><svg class="ic"><use href="#nv"/></svg>NVIDIA 控制面板</button></li>
  <li class="line"></li>
  <li><button><svg class="ic"><use href="#boost"/></svg>一键加速</button></li>
  <li class="line"></li>
  <li><button>新建(W)<svg class="arr cool"><use href="#arr"/></svg></button></li>
  <li class="line"></li>
  <li><button><svg class="ic"><use href="#disp"/></svg>显示设置(D)</button></li>
  <li><button><svg class="ic"><use href="#pers"/></svg>个性化(R)</button></li>
</ul>

<div class="lasso"></div>
<div class="ball"><span>62</span></div>
</body>
</html>
```
FILE: styles.css
```css
* { box-sizing: border-box; }
body { margin: 0; font: 12px/16px "Open Sans", "Noto Sans CJK SC", sans-serif; color: #000; background: #f0f0f0; overflow: hidden; position: relative; }
h1, h2 { margin: 0; font-size: inherit; font-weight: normal; }
ul { list-style: none; margin: 0; padding: 0; }
button, input, select { font: inherit; color: inherit; margin: 0; }
button { display: flex; align-items: center; background: none; border: 0; padding: 0; white-space: nowrap; }
button:disabled { color: #838383; }
svg { display: block; flex: none; }
.defs { position: absolute; width: 0; height: 0; }
.ic { width: 16px; height: 16px; }
.dn { width: 5px; height: 3px; }
.more { width: 9px; height: 6px; }
.song { font-family: "Noto Sans Mono CJK SC", "Noto Sans CJK SC", monospace; }

.app { height: 100vh; display: flex; flex-direction: column; }

.titlebar { height: 23px; flex: none; display: flex; align-items: center; gap: 4px; padding: 0 2px; background: #fff; }
.titlebar h1 { flex: 1; font-size: 13px; white-space: nowrap; }
.winctl { display: flex; }
.winctl button { width: 46px; height: 22px; justify-content: center; }
.winctl svg { width: 10px; height: 10px; }

.menubar { height: 31px; flex: none; display: flex; padding-top: 1px; }
.menus { display: flex; align-items: center; padding-left: 1px; width: 937px; height: 28px; }
.menus button { padding: 0 5px 0 6px; }
.menus .chg, .menus .rb { gap: 4px; padding: 0 3px; }
.menus .chg { padding-left: 9px; }
.chg .dn { margin-left: 3px; }
.tip { width: 188px; background: #f8f8f8; display: flex; align-items: center; padding-left: 28px; border-right: 2px solid #ececec; }
.tip a { color: #2c5f00; text-decoration: none; white-space: nowrap; }
.account { flex: 1; display: flex; align-items: center; gap: 9px; padding: 0 4px 0 5px; background: linear-gradient(#fafafa, #f1f1f1); }
.account button { gap: 4px; }
.account .dn { margin-left: 4px; }
.more { margin-left: auto; margin-bottom: 11px; }

.tools { display: flex; height: 30px; flex: none; }
.band { display: flex; align-items: center; background: linear-gradient(#fcfcfc, #efefef); border-radius: 3px; }
.band button { gap: 4px; padding: 0 3px; height: 24px; }
.band .dn { margin-left: 4px; }
.band .near { margin-left: 0; }
.sep { width: 1px; height: 17px; margin: 0 3px; background: #b4b4b4; flex: none; }
.file { width: 152px; padding: 0 3px 3px 3px; margin-right: 1px; }
.file .sep { height: 25px; }
.calc { width: 549px; padding: 0 3px 3px 0; margin-right: 1px; }
.calc button { padding: 0 3px 0 4px; }
.sigma { width: 16px; font: bold 16px/16px "Liberation Serif", serif; text-align: center; }
.view { flex: 1; padding: 0 4px 3px 2px; }
.view .sep { margin-right: 4px; }
.band .boxed { border: 1px solid #7a7a7a; background: #f6f6f6; width: 63px; padding: 0 2px; gap: 3px; }

.work { flex: 1; min-height: 0; display: flex; gap: 6px; }
.nav { width: 198px; flex: none; display: flex; flex-direction: column; border: 1px solid #9c9c9c; border-width: 0 1px 0 1px; margin-bottom: 1px; }
.navhead { display: flex; align-items: center; gap: 10px; height: 16px; background: #0054e3; color: #fff; padding-right: 4px; margin-bottom: 1px; }
.navhead h2 { flex: 1; font-size: 13px; }
.navhead svg { width: 9px; height: 9px; }
.sect { justify-content: center; height: 22px; flex: none; border-top: 1px solid #9c9c9c; border-bottom: 1px solid #c4c4c4; background: #f0f0f0; }
.expand { display: flex; gap: 7px; align-items: center; height: 27px; flex: none; padding-left: 6px; background: linear-gradient(#fff, #f0f0f0); }
.expand svg { width: 16px; height: 16px; }
.tree { flex: 1; background: #fff; border: 1px solid #828790; padding: 1px 0 0 7px; }
.row { display: flex; align-items: center; height: 16px; white-space: nowrap; }
.row .ic { margin-right: 5px; }
.tw { width: 10px; height: 16px; }
.stub { width: 7px; height: 1px; background: repeating-linear-gradient(90deg, transparent 0 1px, #808080 1px 2px); background-size: 4px 1px; background-position: right; background-repeat: no-repeat; }
.nav .tree ul { margin-left: 5px; padding-left: 20px; background: repeating-linear-gradient(#808080 0 1px, transparent 1px 2px) left / 1px 100% no-repeat; }
.elbow { width: 11px; height: 16px; background: repeating-linear-gradient(90deg, #808080 0 1px, transparent 1px 2px) 0 8px / 100% 1px no-repeat, repeating-linear-gradient(#808080 0 1px, transparent 1px 2px) 0 0 / 1px 100% no-repeat; }
.elbow.end { background-size: 100% 1px, 1px 8px; }
.cur { display: flex; align-items: center; height: 16px; background: #d9d9d9; padding-right: 4px; }

.editor { flex: 1; min-width: 0; display: flex; flex-direction: column; }
.member { height: 28px; flex: none; padding-left: 1px; margin-right: 2px; }
.pick { display: flex; align-items: center; width: 62px; height: 22px; margin: 0 0 0 7px; background: #fff; }
.pick select { appearance: none; border: 0; background: none; flex: 1; width: 48px; padding: 0 0 0 2px; }
.pick .dn { margin: 0 4px 0 0; }
.panes { flex: 1; min-height: 0; display: flex; gap: 4px; padding-bottom: 2px; }
.list { width: 184px; flex: none; display: flex; flex-direction: column; border-right: 1px solid #a0a0a0; }
.find { display: flex; align-items: center; gap: 5px; height: 30px; padding-top: 4px; background: #fff; }
.find input { width: 158px; height: 24px; border: 1px solid #7a7a7a; padding: 0 3px; background: #fff; }
input::placeholder { color: #757575; opacity: 1; }
.members .row .ic { margin-right: 4px; }
.members ul { padding-left: 24px; }
.members .elbow { width: 9px; }
.sel { display: flex; align-items: center; gap: 8px; height: 16px; padding: 0 4px; background: #316ac5; }
.gear { width: 12px; height: 12px; }
.props { flex: 1; min-width: 0; display: flex; flex-direction: column; background: #fff; border: 1px solid #dadada; border-top: 0; margin-right: 2px; padding: 0 2px 2px 2px; }
.tabs { display: flex; height: 21px; flex: none; }
.tabs i { flex: 1; border-bottom: 1px solid #dadada; background: #fff; }
.tab { border-right: 1px solid #dadada; padding: 0 7px 0 4px; }
.sheet { flex: 1; display: flex; justify-content: space-between; border: 1px solid #a0a0a0; margin-top: 3px; padding: 1px 1px 1px 0; }
table { border-collapse: collapse; table-layout: fixed; width: 369px; height: 346px; align-self: flex-start; }
.c1 { width: 21px; } .c2 { width: 191px; } .c3 { width: 126px; } .c4 { width: 31px; }
tr { height: 19px; }
thead tr { height: 22px; }
th, td { border: 1px solid #c0c0c0; padding: 0; font-weight: normal; line-height: 16px; white-space: nowrap; overflow: hidden; }
th { border-left: 0; background: linear-gradient(#fcfcfc, #f0f0f0); }
thead th { border-top: 0; }
th.act { background: linear-gradient(#fadc9c, #f0bc5c); color: #500060; }
td { padding-left: 2px; }
td:last-child { padding-left: 0; text-align: center; }
.k { padding-left: 20px; }
.b { color: #0000f0; }
.g { color: #808080; }
.g button { display: inline-flex; justify-content: center; width: 13px; height: 13px; margin: 0 5px 0 0; border: 1px solid #c0c0c0; vertical-align: middle; }
.g svg { width: 7px; height: 7px; }
td input[type=checkbox] { appearance: none; display: block; width: 13px; height: 13px; margin: 1px auto 0; border: 1px solid #333; background: #fff; }
.rebar { display: inline-block; width: 12px; height: 12px; vertical-align: -2px; }
.on th { background: #ffd48c; color: #500060; }
.on .k { background: #0078d7; color: #fff; }
.edit { display: flex; align-items: center; justify-content: space-between; height: 18px; padding-right: 1px; }
.caret { width: 1px; height: 12px; background: #000; }
.edit button { width: 15px; height: 16px; justify-content: center; border: 1px solid #adadad; background: #e1e1e1; }
.edit svg { width: 11px; height: 2px; }
.scroll { width: 17px; display: flex; flex-direction: column; align-items: center; justify-content: space-between; background: #f0f0f0; padding-bottom: 6px; }
.thumb { width: 15px; height: 348px; background: #cdcdcd; }
.scroll svg { width: 9px; height: 6px; }

.status { display: flex; gap: 2px; height: 22px; flex: none; padding-top: 2px; }
.status span { border: 1px solid #d4d4d4; padding: 1px 0 0 1px; background: linear-gradient(#fbfbfb, #f0f0f0); white-space: nowrap; }
.s1 { width: 148px; } .s2 { width: 78px; } .s3 { width: 98px; } .s4 { width: 48px; } .s5 { flex: 1; } .s6 { width: 70px; }

.taskbar { height: 40px; flex: none; display: flex; background: #020b0e; color: #fff; }
.start { width: 48px; justify-content: center; background: #000; }
.cortana { width: 344px; display: flex; align-items: center; gap: 6px; background: #333; padding: 0 15px 0 9px; }
.ring { width: 21px; height: 21px; border: 3px solid #fff; border-radius: 50%; flex: none; }
.cortana input { flex: 1; min-width: 0; border: 0; background: none; font-size: 14px; padding: 0; }
.cortana input::placeholder { color: #a0a0a0; }
.mic { width: 12px; height: 18px; }
.pins { display: flex; gap: 2px; padding-left: 1px; }
.pins button { width: 48px; height: 40px; justify-content: center; border-bottom: 2px solid transparent; background-clip: padding-box; }
.pins svg { width: 22px; height: 22px; }
.pins .pale { color: #d8d8d8; }
.pins .run { border-bottom-color: #76b9ed; width: 40px; margin: 0 4px; }
.pins .now { width: 48px; margin: 0; background: #363f42; }
.pins .now svg { width: 24px; height: 24px; }
.tray { margin-left: auto; display: flex; align-items: center; line-height: 17px; text-align: center; }
.cpu { width: 56px; margin-right: 16px; }
.chev { width: 12px; height: 7px; margin-right: 10px; }
.tray .ic { margin-right: 8px; }
.ime { font-size: 18px; line-height: 20px; width: 16px; margin-right: 12px; }
.clock { width: 66px; margin: 0 1px 0 6px; line-height: 18px; }
.notes { width: 52px; height: 40px; position: relative; justify-content: center; padding-right: 8px; background: #000; border-right: 1px solid #333; margin-right: 3px; }
.notes svg { width: 18px; height: 16px; }
.notes b { position: absolute; left: 21px; top: 18px; width: 17px; height: 17px; border-radius: 50%; background: #333; border: 1px solid #aaa; font-size: 12px; line-height: 15px; text-align: center; }

.stirrup { position: absolute; left: 1075px; top: 137px; width: 100px; height: 283px; border: 1px solid #555; background: linear-gradient(#b8cadc, #d6e3f2 32px); padding-left: 7px; overflow: hidden; }
.stirrup h2 { height: 30px; line-height: 37px; color: #8a939c; }
.stirrup svg { width: 202px; height: 244px; border: 1px solid #f6f6f6; }

.ctx { position: absolute; right: 0; top: 118px; width: 208px; padding: 4px 2px; border: 1px solid #a0a0a0; background: #f2f2f2; box-shadow: 3px 3px 3px #0006; }
.ctx button { width: 100%; height: 23px; padding: 0 8px 0 31px; }
.ctx button:has(.ic) { padding-left: 8px; }
.ctx .ic { margin-right: 7px; }
.arr { width: 8px; height: 14px; margin-left: auto; }
.warm { color: #a04810; }
.cool { color: #1858a0; }
.line { height: 1px; margin: 3px 8px; background: #919191; }

.lasso { position: absolute; left: 314px; top: 70px; width: 466px; height: 444px; border: 3px solid #0000f4; border-radius: 50%; pointer-events: none; }
.ball { position: absolute; left: 1082px; top: -29px; width: 47px; height: 47px; border-radius: 50%; border: 2px solid #c8d0d4; background: #3cc464; box-shadow: inset 0 0 0 2px #189048, 0 1px 4px #0008; color: #fff; font-weight: bold; font-size: 12px; line-height: 12px; text-align: center; padding-top: 28px; }
.ball span { display: block; }
```
